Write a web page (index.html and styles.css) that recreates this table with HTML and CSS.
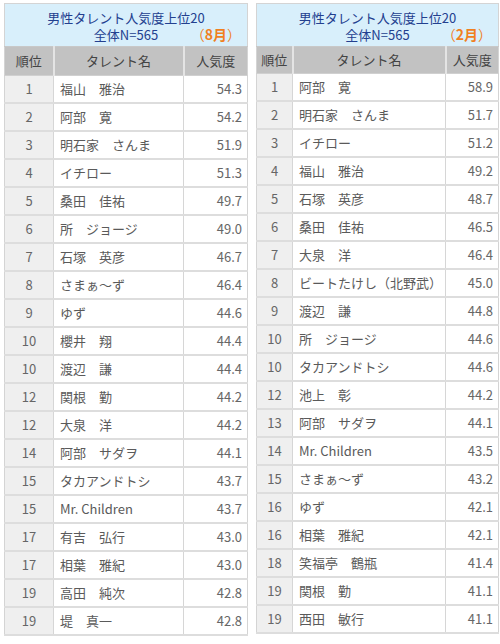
FILE: index.html
```html
<!DOCTYPE html>
<html lang="ja">
<head>
<meta charset="utf-8">
<link rel="stylesheet" href="styles.css">
</head>
<body>
<div class="wrap">
  <table class="rank rank-left">
    <colgroup><col class="c-no-l"><col class="c-name-l"><col class="c-val-l"></colgroup>
    <thead>
      <tr><th colspan="3" class="title">
        <div class="t1">男性タレント人気度上位20</div>
        <div class="t2"><span></span><span class="n">全体N=565</span><span class="month">（<b>8月</b>）</span></div>
      </th></tr>
      <tr class="colhead"><th>順位</th><th>タレント名</th><th>人気度</th></tr>
    </thead>
    <tbody>
      <tr><td class="no">1</td><td class="nm">福山　雅治</td><td class="v">54.3</td></tr>
      <tr><td class="no">2</td><td class="nm">阿部　寛</td><td class="v">54.2</td></tr>
      <tr><td class="no">3</td><td class="nm">明石家　さんま</td><td class="v">51.9</td></tr>
      <tr><td class="no">4</td><td class="nm">イチロー</td><td class="v">51.3</td></tr>
      <tr><td class="no">5</td><td class="nm">桑田　佳祐</td><td class="v">49.7</td></tr>
      <tr><td class="no">6</td><td class="nm">所　ジョージ</td><td class="v">49.0</td></tr>
      <tr><td class="no">7</td><td class="nm">石塚　英彦</td><td class="v">46.7</td></tr>
      <tr><td class="no">8</td><td class="nm">さまぁ～ず</td><td class="v">46.4</td></tr>
      <tr><td class="no">9</td><td class="nm">ゆず</td><td class="v">44.6</td></tr>
      <tr><td class="no">10</td><td class="nm">櫻井　翔</td><td class="v">44.4</td></tr>
      <tr><td class="no">10</td><td class="nm">渡辺　謙</td><td class="v">44.4</td></tr>
      <tr><td class="no">12</td><td class="nm">関根　勤</td><td class="v">44.2</td></tr>
      <tr><td class="no">12</td><td class="nm">大泉　洋</td><td class="v">44.2</td></tr>
      <tr><td class="no">14</td><td class="nm">阿部　サダヲ</td><td class="v">44.1</td></tr>
      <tr><td class="no">15</td><td class="nm">タカアンドトシ</td><td class="v">43.7</td></tr>
      <tr><td class="no">15</td><td class="nm">Mr. Children</td><td class="v">43.7</td></tr>
      <tr><td class="no">17</td><td class="nm">有吉　弘行</td><td class="v">43.0</td></tr>
      <tr><td class="no">17</td><td class="nm">相葉　雅紀</td><td class="v">43.0</td></tr>
      <tr><td class="no">19</td><td class="nm">高田　純次</td><td class="v">42.8</td></tr>
      <tr><td class="no">19</td><td class="nm">堤　真一</td><td class="v">42.8</td></tr>
    </tbody>
  </table>

  <table class="rank rank-right">
    <colgroup><col class="c-no-r"><col class="c-name-r"><col class="c-val-r"></colgroup>
    <thead>
      <tr><th colspan="3" class="title">
        <div class="t1">男性タレント人気度上位20</div>
        <div class="t2"><span></span><span class="n">全体N=565</span><span class="month">（<b>2月</b>）</span></div>
      </th></tr>
      <tr class="colhead"><th>順位</th><th>タレント名</th><th>人気度</th></tr>
    </thead>
    <tbody>
      <tr><td class="no">1</td><td class="nm">阿部　寛</td><td class="v">58.9</td></tr>
      <tr><td class="no">2</td><td class="nm">明石家　さんま</td><td class="v">51.7</td></tr>
      <tr><td class="no">3</td><td class="nm">イチロー</td><td class="v">51.2</td></tr>
      <tr><td class="no">4</td><td class="nm">福山　雅治</td><td class="v">49.2</td></tr>
      <tr><td class="no">5</td><td class="nm">石塚　英彦</td><td class="v">48.7</td></tr>
      <tr><td class="no">6</td><td class="nm">桑田　佳祐</td><td class="v">46.5</td></tr>
      <tr><td class="no">7</td><td class="nm">大泉　洋</td><td class="v">46.4</td></tr>
      <tr><td class="no">8</td><td class="nm">ビートたけし（北野武）</td><td class="v">45.0</td></tr>
      <tr><td class="no">9</td><td class="nm">渡辺　謙</td><td class="v">44.8</td></tr>
      <tr><td class="no">10</td><td class="nm">所　ジョージ</td><td class="v">44.6</td></tr>
      <tr><td class="no">10</td><td class="nm">タカアンドトシ</td><td class="v">44.6</td></tr>
      <tr><td class="no">12</td><td class="nm">池上　彰</td><td class="v">44.2</td></tr>
      <tr><td class="no">13</td><td class="nm">阿部　サダヲ</td><td class="v">44.1</td></tr>
      <tr><td class="no">14</td><td class="nm">Mr. Children</td><td class="v">43.5</td></tr>
      <tr><td class="no">15</td><td class="nm">さまぁ～ず</td><td class="v">43.2</td></tr>
      <tr><td class="no">16</td><td class="nm">ゆず</td><td class="v">42.1</td></tr>
      <tr><td class="no">16</td><td class="nm">相葉　雅紀</td><td class="v">42.1</td></tr>
      <tr><td class="no">18</td><td class="nm">笑福亭　鶴瓶</td><td class="v">41.4</td></tr>
      <tr><td class="no">19</td><td class="nm">関根　勤</td><td class="v">41.1</td></tr>
      <tr><td class="no">19</td><td class="nm">西田　敏行</td><td class="v">41.1</td></tr>
    </tbody>
  </table>
</div>
</body>
</html>
```

FILE: styles.css
```css
html, body {
  margin: 0;
  padding: 0;
  background: #ffffff;
}
body {
  font-family: "Noto Sans CJK JP", "Noto Sans", sans-serif;
  font-size: 13px;
  line-height: 16px;
  color: #555555;
}
.wrap {
  display: flex;
  gap: 8px;
  padding: 3px 3px 0 4px;
  align-items: flex-start;
}
.rank {
  border-collapse: collapse;
  table-layout: fixed;
  border: 1px solid #d4d4d4;
}
.rank-left { width: 243px; }
.rank-right { width: 242px; }
.c-no-l { width: 49px; }
.c-name-l { width: 130px; }
.c-val-l { width: 64px; }
.c-no-r { width: 36px; }
.c-name-r { width: 153px; }
.c-val-r { width: 53px; }

.title {
  background: #d8effb;
  height: 43px;
  padding: 3px 6px 2px;
  font-weight: normal;
  color: #23408f;
  line-height: 17px;
  box-sizing: border-box;
  border-bottom: 1px solid #c8c8c8;
}
.t1 { text-align: center; }
.t2 {
  display: grid;
  grid-template-columns: 1fr auto 1fr;
  align-items: center;
}
.t2 .month {
  justify-self: end;
  color: #f0801f;
  font-size: 14px;
}
.t2 .month b { font-weight: bold; }

.colhead th {
  background: #c2c2c2;
  color: #444444;
  font-weight: normal;
  height: 28px;
  padding: 0;
  border-right: 2px solid #e4e4e4;
  border-bottom: 1px solid #d0d0d0;
}
.colhead th:last-child { border-right: none; }
.rank-right .colhead th { height: 26px; }

.rank td {
  height: 26px;
  padding: 0;
  border: 1px solid #d6d6d6;
  border-width: 0 1px 1px 0;
  white-space: nowrap;
  overflow: hidden;
}
.rank tbody tr td { border-bottom: 2px solid #dddddd; }
.rank td.no {
  background: #efefef;
  text-align: center;
  color: #666666;
}
.rank td.nm {
  padding-left: 6px;
  color: #5a5a5a;
}
.rank td.v {
  text-align: right;
  padding-right: 5px;
  color: #666666;
  border-right: none;
}
```
